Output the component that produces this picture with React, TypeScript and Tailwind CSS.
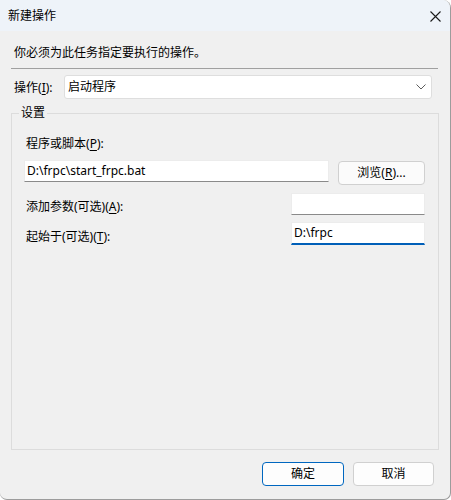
import React from 'react'

const font = "font-['Noto_Sans','Noto_Sans_CJK_SC',sans-serif]"

function Key({ k }: { k: string }) {
  return (
    <>
      (<u className="underline-offset-[2px]">{k}</u>)
    </>
  )
}

export default function App() {
  return (
    <div
      className={`${font} text-[12px] leading-[16px] text-black w-[451px] h-[500px] bg-[#f0f0f0] border-r border-b border-[#9c9c9c] rounded-tr-[8px] rounded-b-[7px] overflow-hidden flex flex-col`}
    >
      {/* title bar */}
      <div className="h-[31px] shrink-0 bg-[#eef3f9] flex items-center justify-between pl-[8px] pr-[9px]">
        <span>新建操作</span>
        <svg width="11" height="11" viewBox="0 0 11 11" className="mt-[1px]">
          <path d="M0.5 0.5L10.5 10.5M10.5 0.5L0.5 10.5" stroke="#1a1a1a" strokeWidth="1.1" />
        </svg>
      </div>

      <div className="px-[11px] flex flex-col">
        <div className="pl-[3px] mt-[14px]">你必须为此任务指定要执行的操作。</div>
        <div className="mt-[7px] h-px bg-[#a0a0a0] mr-[1px]" />

        <div className="mt-[6px] flex items-center pl-[3px]">
          <span className="w-[50px] pt-[2px]">
            操作<Key k="I" />:
          </span>
          <div className="w-[368px] h-[24px] bg-white border border-[#dedede] rounded-[3px] flex items-center justify-between pl-[3px] pr-[5px]">
            <span>启动程序</span>
            <svg width="10" height="6" viewBox="0 0 10 6">
              <path d="M0.5 0.5L5 5L9.5 0.5" fill="none" stroke="#5c5c5c" strokeWidth="1" />
            </svg>
          </div>
        </div>

        {/* group box */}
        <div className="relative mt-[14px] h-[337px] w-[428px] border border-[#dcdcdc] pl-[12px] pr-[13px] pt-[22px]">
          <span className="absolute -top-[9px] left-[7px] px-[2px] bg-[#f0f0f0]">设置</span>

          <div className="pl-[2px]">
            程序或脚本<Key k="P" />:
          </div>
          <div className="mt-[8px] flex items-start gap-[9px]">
            <div className="w-[305px] h-[22px] bg-white border border-[#ececec] border-b-[#8a8a8a] flex items-center pl-[2px]">
              D:\frpc\start_frpc.bat
            </div>
            <div className="mt-[1px] w-[87px] h-[24px] bg-[#fbfbfb] border border-[#d0d0d0] rounded-[4px] flex items-center justify-center">
              浏览<Key k="R" />...
            </div>
          </div>

          <div className="mt-[8px] flex items-start justify-between">
            <span className="pl-[2px] mt-[6px]">
              添加参数(可选)<Key k="A" />:
            </span>
            <div className="w-[134px] h-[22px] bg-white border border-[#ececec] border-b-[#8a8a8a]" />
          </div>

          <div className="mt-[7px] flex items-start justify-between">
            <span className="pl-[2px] mt-[7px]">
              起始于(可选)<Key k="T" />:
            </span>
            <div className="w-[134px] h-[23px] bg-white border border-[#ececec] border-b-2 border-b-[#005fb8] flex items-center pl-[2px]">
              D:\frpc
            </div>
          </div>
        </div>

        <div className="mt-[12px] flex justify-end gap-[9px] pr-[5px]">
          <div className="w-[82px] h-[24px] bg-[#fdfdfd] border border-[#0067c0] rounded-[4px] flex items-center justify-center">
            确定
          </div>
          <div className="w-[81px] h-[24px] bg-[#fdfdfd] border border-[#d0d0d0] rounded-[4px] flex items-center justify-center">
            取消
          </div>
        </div>
      </div>
    </div>
  )
}
